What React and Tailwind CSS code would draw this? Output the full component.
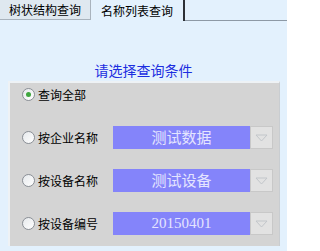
const font = { fontFamily: '"Noto Sans CJK SC", "Liberation Sans", sans-serif' };

function Radio({ checked }) {
  return (
    <span className="relative flex h-[13px] w-[13px] shrink-0 items-center justify-center rounded-full border border-[#8a8f96] bg-gradient-to-br from-[#e6e9ec] to-white">
      {checked && <span className="h-[5px] w-[5px] rounded-full bg-[#3fa63f]" />}
    </span>
  );
}

function Combo({ value, serif }) {
  return (
    <div className="flex h-[23px] w-[160px]">
      <div
        className={`flex flex-1 items-center justify-center bg-[#8484fa] text-[#e4e4ff] ${serif ? 'text-[15px]' : 'text-[15px]'}`}
        style={serif ? { fontFamily: '"Liberation Serif", serif' } : undefined}
      >
        {value}
      </div>
      <div className="flex w-[23px] items-center justify-center border border-[#c8c8c8] bg-[#e2e2e2]">
        <svg width="13" height="8" viewBox="0 0 13 8">
          <path d="M1 1 L12 1 L6.5 7 Z" fill="none" stroke="#c2c6ca" strokeWidth="1" />
        </svg>
      </div>
    </div>
  );
}

const rows = [
  { label: '按企业名称', value: '测试数据' },
  { label: '按设备名称', value: '测试设备' },
  { label: '按设备编号', value: '20150401', serif: true },
];

export default function App() {
  return (
    <div className="h-[251px] w-[287px] overflow-hidden bg-[#e3f1fd] text-[12px] text-black" style={font}>
      <div className="flex h-[21px]">
        <div className="flex h-[20px] w-[91px] items-center justify-center border-r border-b border-[#a9b3bd] bg-[#dfe8f0] pt-[1px]">
          树状结构查询
        </div>
        <div className="flex h-[21px] w-[94px] items-start justify-center border-r-2 border-[#2c3036] pt-[2px]">
          名称列表查询
        </div>
        <div className="flex-1 border-b border-[#8d99a5]" />
      </div>

      <div className="mt-[41px] flex h-[17px] items-center justify-center pr-[-2px] text-[14px] text-[#1c2ee0]">
        请选择查询条件
      </div>

      <div className="ml-[8px] mt-[2px] flex h-[165px] w-[272px] flex-col gap-[20px] border-t-2 border-l-2 border-r border-[#eef2f5] border-r-[#c9cdd1] bg-[#d4d4d4] pt-[0px]">
        <div className="flex h-[23px] items-center pl-[12px]">
          <Radio checked />
          <span className="ml-[3px]">查询全部</span>
        </div>
        {rows.map((row) => (
          <div key={row.label} className="flex h-[23px] items-center pl-[12px]">
            <Radio />
            <span className="ml-[3px] w-[75px]">{row.label}</span>
            <Combo value={row.value} serif={row.serif} />
          </div>
        ))}
      </div>
    </div>
  );
}
